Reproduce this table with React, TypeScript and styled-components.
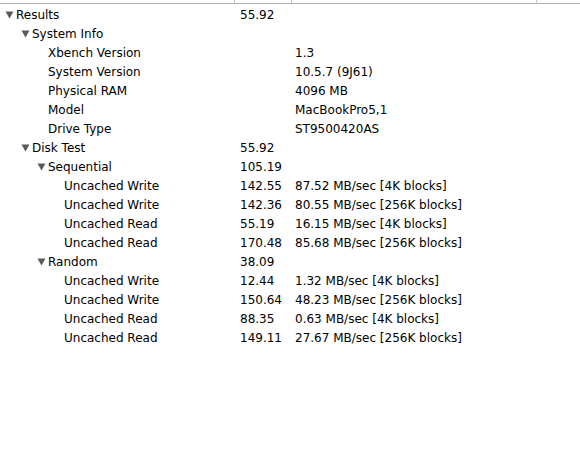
import React from "react";
import styled, { createGlobalStyle } from "styled-components";

const Global = createGlobalStyle`
  html, body { margin: 0; padding: 0; background: #fff; }
  body { font-family: "DejaVu Sans", "Liberation Sans", sans-serif; }
`;

const COLS = "235px 57px 245px 1fr";

const Outline = styled.div`
  width: 580px;
  height: 467px;
  background: #fff;
  overflow: hidden;
`;

const Header = styled.div`
  display: grid;
  grid-template-columns: ${COLS};
  height: 3px;
  border-bottom: 1px solid #b4b4b4;
  margin-bottom: 1px;
`;

const HeaderCell = styled.div<{ $last?: boolean }>`
  border-right: ${(p) => (p.$last ? "none" : "1px solid #c4c4c4")};
`;

const Row = styled.div`
  display: grid;
  grid-template-columns: ${COLS};
  height: 19px;
  align-items: center;
  font-size: 12px;
  color: #000;
  white-space: nowrap;
`;

const NameCell = styled.div<{ $level: number }>`
  display: flex;
  align-items: center;
  padding-left: ${(p) => 5 + p.$level * 16}px;
`;

const Disclosure = styled.span<{ $open: boolean }>`
  display: inline-block;
  width: 11px;
  height: 8px;
  flex: none;
  visibility: ${(p) => (p.$open ? "visible" : "hidden")};
  svg { display: block; }
`;

const ScoreCell = styled.div`
  padding-left: 5px;
`;

const DetailCell = styled.div`
  padding-left: 3px;
`;

type Item = { name: string; level: number; group?: boolean; score?: string; detail?: string };

const items: Item[] = [
  { name: "Results", level: 0, group: true, score: "55.92" },
  { name: "System Info", level: 1, group: true },
  { name: "Xbench Version", level: 2, detail: "1.3" },
  { name: "System Version", level: 2, detail: "10.5.7 (9J61)" },
  { name: "Physical RAM", level: 2, detail: "4096 MB" },
  { name: "Model", level: 2, detail: "MacBookPro5,1" },
  { name: "Drive Type", level: 2, detail: "ST9500420AS" },
  { name: "Disk Test", level: 1, group: true, score: "55.92" },
  { name: "Sequential", level: 2, group: true, score: "105.19" },
  { name: "Uncached Write", level: 3, score: "142.55", detail: "87.52 MB/sec [4K blocks]" },
  { name: "Uncached Write", level: 3, score: "142.36", detail: "80.55 MB/sec [256K blocks]" },
  { name: "Uncached Read", level: 3, score: "55.19", detail: "16.15 MB/sec [4K blocks]" },
  { name: "Uncached Read", level: 3, score: "170.48", detail: "85.68 MB/sec [256K blocks]" },
  { name: "Random", level: 2, group: true, score: "38.09" },
  { name: "Uncached Write", level: 3, score: "12.44", detail: "1.32 MB/sec [4K blocks]" },
  { name: "Uncached Write", level: 3, score: "150.64", detail: "48.23 MB/sec [256K blocks]" },
  { name: "Uncached Read", level: 3, score: "88.35", detail: "0.63 MB/sec [4K blocks]" },
  { name: "Uncached Read", level: 3, score: "149.11", detail: "27.67 MB/sec [256K blocks]" },
];

const Triangle = () => (
  <svg width="9" height="8" viewBox="0 0 9 8">
    <path d="M0.5 0.5 L8.5 0.5 L4.5 7.5 Z" fill="#5a5a5a" />
  </svg>
);

export default function App() {
  return (
    <>
      <Global />
      <Outline>
        <Header>
          <HeaderCell />
          <HeaderCell />
          <HeaderCell />
          <HeaderCell $last />
        </Header>
        {items.map((it, i) => (
          <Row key={i}>
            <NameCell $level={it.level}>
              <Disclosure $open={!!it.group}>
                <Triangle />
              </Disclosure>
              <span>{it.name}</span>
            </NameCell>
            <ScoreCell>{it.score ?? ""}</ScoreCell>
            <DetailCell>{it.detail ?? ""}</DetailCell>
            <div />
          </Row>
        ))}
      </Outline>
    </>
  );
}
